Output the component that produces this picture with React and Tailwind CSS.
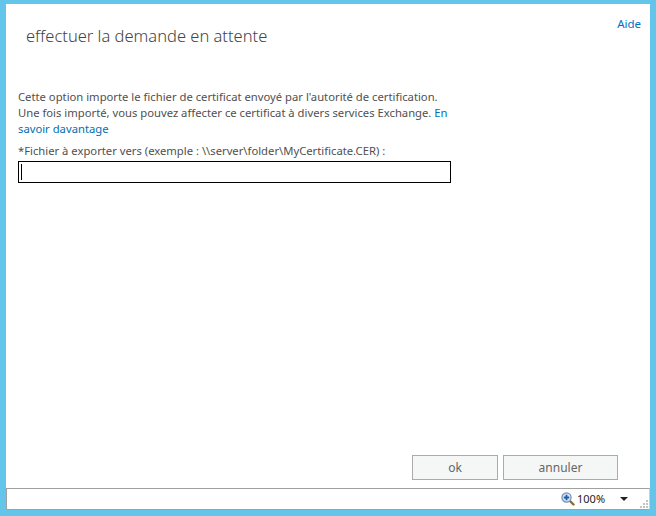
import { useState } from "react";

function ZoomIcon() {
  return (
    <svg width="14" height="14" viewBox="0 0 14 14" className="shrink-0">
      <path d="M8.5 8.5L12.5 12.5" stroke="#8a6a3c" strokeWidth="2.4" strokeLinecap="round" />
      <circle cx="5.5" cy="5.5" r="4.6" fill="#d5e5f5" stroke="#6f8fb5" strokeWidth="1.2" />
      <path d="M5.5 2.8V8.2M2.8 5.5H8.2" stroke="#1f5fa8" strokeWidth="1.8" />
    </svg>
  );
}

function Grip() {
  const dots = ["col-start-3 row-start-1", "col-start-2 row-start-2", "col-start-3 row-start-2", "col-start-1 row-start-3", "col-start-2 row-start-3", "col-start-3 row-start-3"];
  return (
    <div className="grid grid-cols-[repeat(3,2px)] grid-rows-[repeat(3,2px)] gap-px self-end mb-px mr-px">
      {dots.map((d) => (
        <div key={d} className={`${d} size-[2px] bg-[#c4c4c4]`} />
      ))}
    </div>
  );
}

export default function App() {
  const [path, setPath] = useState("");

  return (
    <div className="h-[516px] w-[656px] bg-[#63c5e9] pt-[4px] px-[6px] pb-[6px] flex flex-col font-['Noto_Sans',sans-serif] text-[#505050]">
      <div className="flex-1 min-h-0 bg-white flex flex-col">
        <div className="flex justify-between items-start h-[80px]">
          <h1 className="ml-[20px] mt-[20px] text-[16.5px] leading-[24px] font-light text-[#444444]">
            effectuer la demande en attente
          </h1>
          <a href="#" className="mr-[9px] mt-[12px] text-[11.5px] leading-[16px] text-[#0072c6]">
            Aide
          </a>
        </div>

        <div className="ml-[12px] mt-[5px] w-[430px] text-[11.25px] leading-[16px]">
          <p>
            Cette option importe le fichier de certificat envoyé par l'autorité de certification. Une fois importé, vous pouvez affecter ce certificat à divers services Exchange.{" "}
            <a href="#" className="text-[#006fb5]">En savoir davantage</a>
          </p>
          <label htmlFor="cert" className="block mt-[6px] whitespace-nowrap">
            *Fichier à exporter vers (exemple : \\server\folder\MyCertificate.CER) :
          </label>
          <div className="relative mt-[2px] w-[433px]">
            <input
              id="cert"
              value={path}
              onChange={(e) => setPath(e.target.value)}
              className="block h-[22px] w-full border border-black bg-white px-[2px] outline-none"
            />
            {/* caret is drawn, a real one blinks */}
            <div className="absolute left-[3px] top-[3px] h-[16px] w-px bg-black pointer-events-none" />
          </div>
        </div>

        <div className="mt-auto flex justify-end gap-[5px] pr-[32px] pb-[8px]">
          <button type="button" className="h-[25px] w-[86px] border border-[#ababab] bg-[#f5f6f6] text-[12px] text-[#666666]">
            ok
          </button>
          <button type="button" className="h-[25px] w-[115px] border border-[#ababab] bg-[#f5f6f6] text-[12px] text-[#666666]">
            annuler
          </button>
        </div>

        <div className="h-[22px] border border-[#a0a0a0] border-r-[#d0d0d0] flex items-center justify-end text-[11px] text-[#222222]">
          <ZoomIcon />
          <span className="ml-[2px] w-[30px]">100%</span>
          <div className="ml-[13px] border-x-[4px] border-x-transparent border-t-[4px] border-t-[#222222]" />
          <div className="ml-[12px] self-stretch flex">
            <Grip />
          </div>
        </div>
      </div>
    </div>
  );
}
